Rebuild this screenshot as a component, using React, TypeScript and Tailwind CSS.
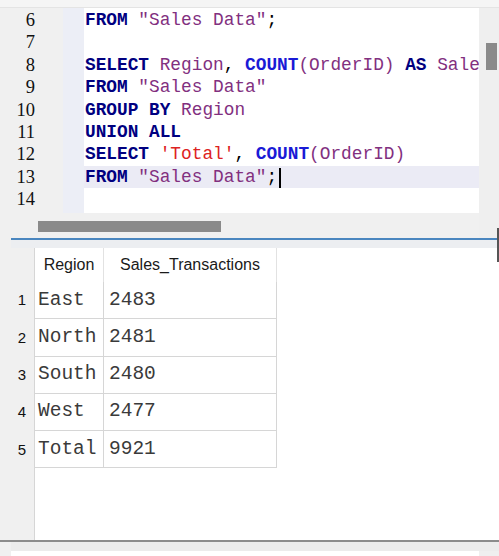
import React from "react";

type Tok = { t: string; c?: string };

const KW = "text-[#000080] font-bold";
const FN = "text-[#1a1ad6] font-bold";
const ID = "text-[#82307f]";
const STR = "text-[#dd2222]";
const PL = "text-[#000000]";

const lines: { n: number; toks: Tok[]; active?: boolean }[] = [
  { n: 6, toks: [{ t: "FROM", c: KW }, { t: " " }, { t: '"Sales Data"', c: ID }, { t: ";", c: PL }] },
  { n: 7, toks: [] },
  {
    n: 8,
    toks: [
      { t: "SELECT", c: KW },
      { t: " " },
      { t: "Region", c: ID },
      { t: ", ", c: PL },
      { t: "COUNT", c: FN },
      { t: "(OrderID)", c: ID },
      { t: " " },
      { t: "AS", c: KW },
      { t: " " },
      { t: "Sale", c: ID },
    ],
  },
  { n: 9, toks: [{ t: "FROM", c: KW }, { t: " " }, { t: '"Sales Data"', c: ID }] },
  { n: 10, toks: [{ t: "GROUP BY", c: KW }, { t: " " }, { t: "Region", c: ID }] },
  { n: 11, toks: [{ t: "UNION ALL", c: KW }] },
  {
    n: 12,
    toks: [
      { t: "SELECT", c: KW },
      { t: " " },
      { t: "'Total'", c: STR },
      { t: ", ", c: PL },
      { t: "COUNT", c: FN },
      { t: "(OrderID)", c: ID },
    ],
  },
  { n: 13, toks: [{ t: "FROM", c: KW }, { t: " " }, { t: '"Sales Data"', c: ID }, { t: ";", c: PL }], active: true },
  { n: 14, toks: [] },
];

const rows = [
  ["East", "2483"],
  ["North", "2481"],
  ["South", "2480"],
  ["West", "2477"],
  ["Total", "9921"],
];

function Editor() {
  return (
    <div className="flex h-[205px] pl-[11px]">
      <div className="w-[52px] bg-[#f0f0f0] pt-[1px] pr-[28px] text-right font-['Liberation_Serif',serif] text-[18.5px] leading-[22.4px] text-[#111]">
        {lines.map((l) => (
          <div key={l.n} className="h-[22.4px]">
            {l.n}
          </div>
        ))}
      </div>
      <div className="w-[21px] bg-[#eceef6]" />
      <div className="flex-1 overflow-hidden bg-white pt-[1px]">
        {lines.map((l) => (
          <div
            key={l.n}
            className={
              "relative h-[22.4px] whitespace-pre pl-[1px] font-['Liberation_Mono',monospace] text-[17.8px] leading-[22.4px] " +
              (l.active ? "bg-[#ebebf5]" : "")
            }
          >
            {l.toks.map((k, i) => (
              <span key={i} className={k.c}>
                {k.t}
              </span>
            ))}
            {l.active && <span className="absolute top-[2px] left-[195px] h-[20px] w-[2px] bg-black" />}
          </div>
        ))}
      </div>
      <div className="w-[20px] bg-[#efefef] pt-[35px] pl-[7px]">
        <div className="h-[27px] w-[11px] bg-[#8a8a8a]" />
      </div>
    </div>
  );
}

function Results() {
  return (
    <div className="flex h-[292px] pl-[12px]">
      <div className="w-[23px] border-r border-[#d6d6d6] bg-[#f0f0f0] font-['Liberation_Sans',sans-serif] text-[15px] text-[#111]">
        <div className="h-[34px]" />
        {rows.map((_, i) => (
          <div key={i} className="flex h-[37.3px] items-center justify-center pr-[2px]">
            {i + 1}
          </div>
        ))}
      </div>
      <div className="flex-1 bg-white">
        <div className="flex h-[34px] font-['Liberation_Sans',sans-serif] text-[16px] text-[#1a1a1a]">
          <div className="flex w-[69px] items-center justify-center border-r border-[#e2e2e2]">Region</div>
          <div className="flex w-[173px] items-center justify-center border-r border-[#e2e2e2]">
            Sales_Transactions
          </div>
        </div>
        {rows.map((r, i) => (
          <div
            key={i}
            className="flex h-[37.3px] font-['Liberation_Mono',monospace] text-[19.5px] text-[#3a3a3a]"
          >
            <div className="flex w-[69px] items-center border-r border-b border-[#d6d6d6] pl-[3px]">{r[0]}</div>
            <div className="flex w-[173px] items-center border-r border-b border-[#d6d6d6] pl-[5px]">{r[1]}</div>
          </div>
        ))}
      </div>
    </div>
  );
}

export default function App() {
  return (
    <div className="relative flex h-[556px] w-[499px] flex-col overflow-hidden bg-[#f0f0f0]">
      <div className="h-[8px] border-b border-[#e4e4e4] bg-[#f5f5f5]" />
      <Editor />
      <div className="flex h-[25px] pl-[11px]">
        <div className="flex-1 bg-[#f0f0f0] pt-[8px] pl-[27px]">
          <div className="h-[11px] w-[183px] bg-[#8a8a8a]" />
        </div>
        <div className="w-[20px] bg-[#efefef]" />
      </div>
      <div className="ml-[11px] h-[2px] bg-[#4a86bf]" />
      <div className="ml-[11px] h-[8px] bg-[#eceef1]" />
      <Results />
      <div className="h-[2px] bg-[#8c8c8c]" />
      <div className="flex h-[9px] pl-[11px]">
        <div className="flex-1 bg-[#ececec]" />
      </div>
      <div className="flex flex-1 bg-white">
        <div className="w-[11px] bg-[#f0f0f0]" />
        <div className="flex-1" />
        <div className="w-[20px] bg-[#efefef]" />
      </div>
      <div className="absolute right-0 top-[228px] h-[34px] w-[2px] bg-[#555]" />
    </div>
  );
}
